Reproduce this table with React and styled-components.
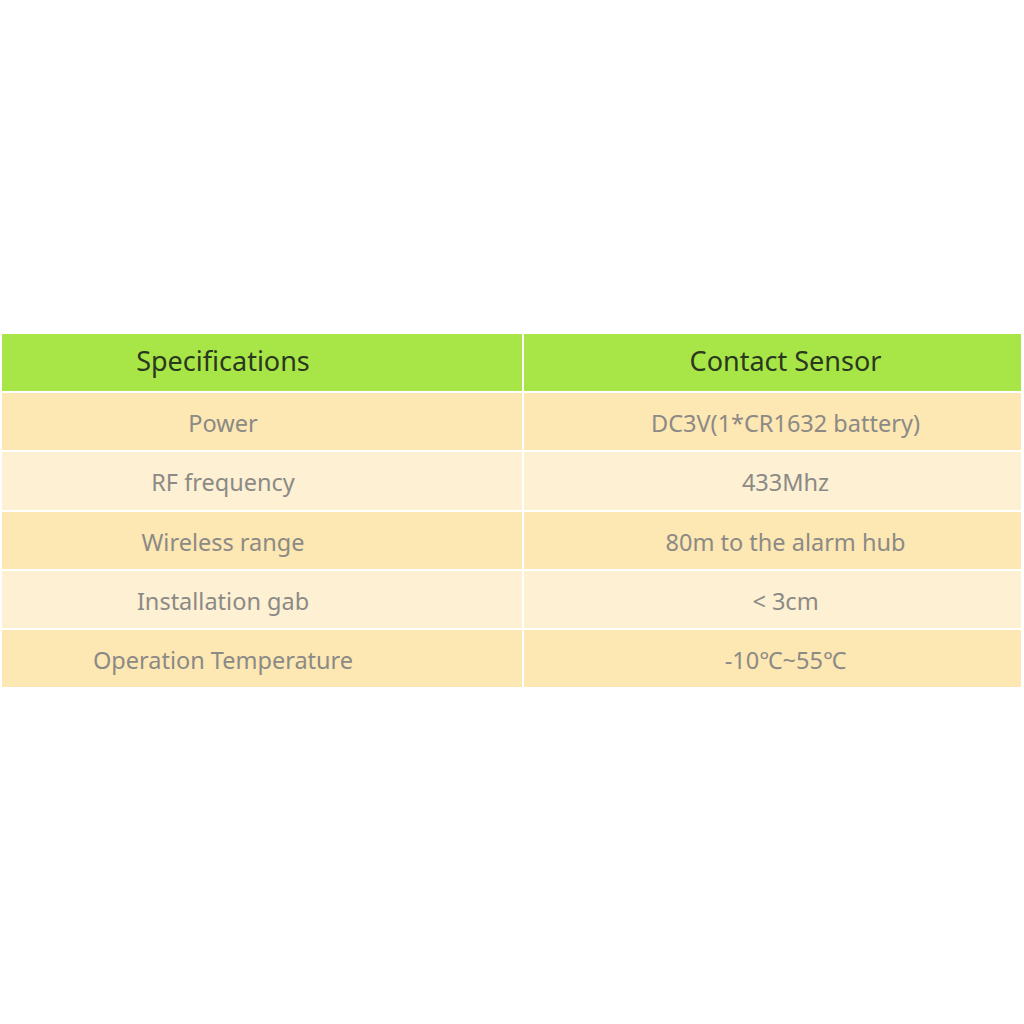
import React from "react";
import styled, { createGlobalStyle } from "styled-components";

const Global = createGlobalStyle`
  html, body { margin: 0; padding: 0; background: #fff; }
  body { font-family: "Noto Sans", "Open Sans", sans-serif; }
`;

const Page = styled.div`
  width: 1024px;
  height: 1024px;
  background: #fff;
  padding-top: 334px;
  padding-left: 2px;
  box-sizing: border-box;
`;

const Table = styled.div`
  width: 1019px;
  display: grid;
  grid-template-columns: 520px 497px;
  grid-template-rows: 57px 57px 58px 57px 57px 57px;
  column-gap: 2px;
  row-gap: 2px;
  background: #fff;
`;

const Cell = styled.div`
  display: flex;
  align-items: center;
  justify-content: center;
  box-sizing: border-box;
  padding-right: ${(p) => (p.$left ? 78 : 0)}px;
  padding-left: ${(p) => (p.$left ? 0 : 26)}px;
  padding-bottom: ${(p) => (p.$head ? 4 : 0)}px;
  padding-top: ${(p) => (p.$head ? 0 : 2)}px;
  background: ${(p) => (p.$head ? "#a7e646" : p.$odd ? "#fde7b2" : "#fdf0d3")};
  color: ${(p) => (p.$head ? "#2b3820" : "#8b8a86")};
  font-size: ${(p) => (p.$head ? 27 : 23.5)}px;
  white-space: nowrap;
`;

const rows = [
  ["Power", "DC3V(1*CR1632 battery)"],
  ["RF frequency", "433Mhz"],
  ["Wireless range", "80m to the alarm hub"],
  ["Installation gab", "< 3cm"],
  ["Operation Temperature", "-10℃~55℃"],
];

export default function App() {
  return (
    <>
      <Global />
      <Page>
        <Table>
          <Cell $head $left>Specifications</Cell>
          <Cell $head>Contact Sensor</Cell>
          {rows.map(([a, b], i) => (
            <React.Fragment key={a}>
              <Cell $left $odd={i % 2 === 0}>{a}</Cell>
              <Cell $odd={i % 2 === 0}>{b}</Cell>
            </React.Fragment>
          ))}
        </Table>
      </Page>
    </>
  );
}
